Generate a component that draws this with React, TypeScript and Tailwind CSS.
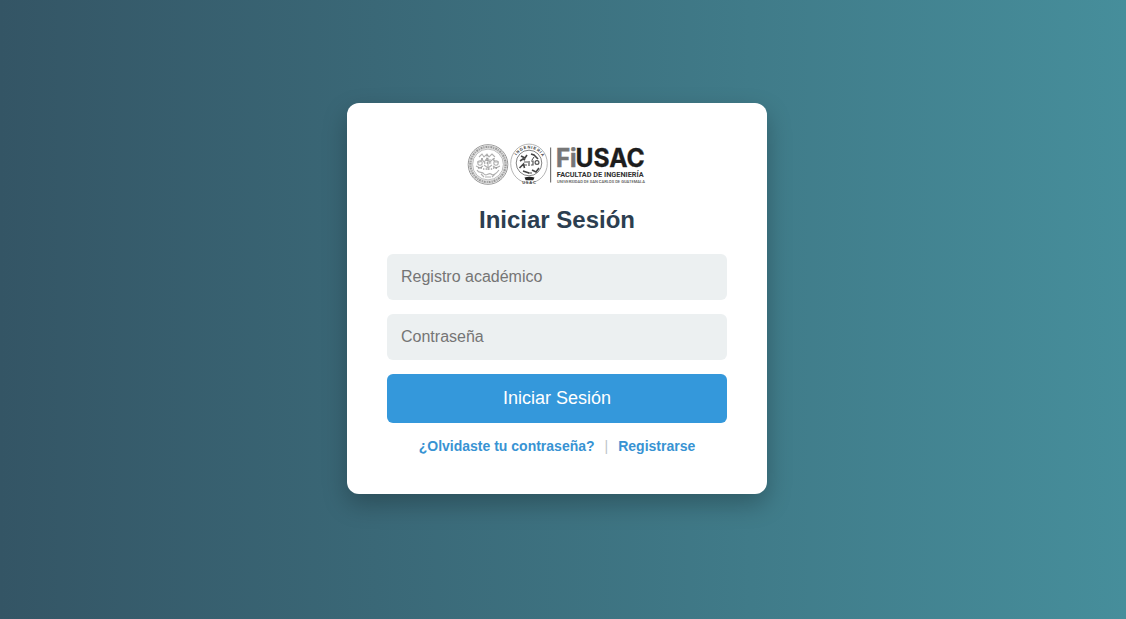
const sans = "font-['Liberation_Sans',Arial,sans-serif]";

function CarlosSeal() {
  return (
    <g fill="none" stroke="#8a8a8a">
      <circle cx="21" cy="21.5" r="19.8" strokeWidth="0.9" />
      <circle cx="21" cy="21.5" r="17.6" stroke="#d2d2d2" strokeWidth="3.2" />
      <circle cx="21" cy="21.5" r="17.6" stroke="#989898" strokeWidth="2" strokeDasharray="1.6 1.2 0.8 1.4" />
      <circle cx="21" cy="21.5" r="15.4" stroke="#a0a0a0" strokeWidth="0.7" />
      <g stroke="#b0b0b0" strokeWidth="1.1">
        <path d="M12 14l3-3 2 3 3-3 2 3 3-3 3 3M10 19h3l2-3 2 3 3-3 3 3 3-3 2 3h4" />
        <path d="M21 15v12M18 17h6M17 22l4 3 4-3M9 23l4 2 3-2M26 23l3 2 4-2" />
        <path d="M10 27c2 4 5 1 7 4s5-2 7 0 5 0 8-4M14 31l3 3M28 31l-3 3M18 34h6" />
        <circle cx="13" cy="20" r="2.2" />
        <circle cx="29" cy="20" r="2.2" />
      </g>
      <g stroke="#777" strokeWidth="1" strokeDasharray="1.4 1.2">
        <path d="M17 20h8M16 26h10M11 25h5M26 25h5M20 12v6M15 15v3M27 15v3" />
      </g>
    </g>
  );
}

function EngineeringSeal() {
  return (
    <g fill="none">
      <ellipse cx="62" cy="20.5" rx="18.3" ry="19.4" stroke="#a2a2a2" strokeWidth="0.8" />
      <circle cx="62" cy="20" r="12.8" stroke="#777" strokeWidth="0.9" />
      <path id="seal-top" d="M47.4 18.5a14.7 14.7 0 0 1 29.2 0" />
      <text fill="#333" fontSize="4" fontWeight="700" fontFamily="Liberation Sans, sans-serif">
        <textPath href="#seal-top" startOffset="6.5" textLength="31">INGENIERIA</textPath>
      </text>
      <g stroke="#444" strokeWidth="1.6">
        <path d="M54 13l4 2 2-3M64 11l3 1 4 4M53 18l3-2 2 1M52.5 25l4-4 1 4M56 28l6 2M65 27l4 2 3-4" />
        <path d="M67 14l-2 3M56 14l2 3M61 30h4" strokeWidth="1" />
      </g>
      <g stroke="#555" strokeWidth="1.2">
        <path d="M57 19h4M57 22h3M62 18v5M64 18h2v4h-2" />
        <circle cx="70" cy="19.5" r="1.9" />
      </g>
      <path d="M57.5 34.5q5-1.6 10 0l-1.3 2.7h-7.4z" fill="#222" />
      <text x="55.2" y="41" fill="#444" fontSize="4" fontWeight="700" textLength="13.6" fontFamily="Liberation Sans, sans-serif">
        USAC
      </text>
    </g>
  );
}

function Logo() {
  return (
    <svg width="180" height="43" viewBox="0 0 180 43" role="img" aria-label="FIUSAC" className="block overflow-visible">
      <CarlosSeal />
      <EngineeringSeal />
      <path d="M83.6 4.5v35" stroke="#777" strokeWidth="1.2" />
      <g fontFamily="Inter, sans-serif" fontWeight="700" fontSize="25">
        <text x="89" y="24.2" fill="#777" stroke="#777" strokeWidth="0.6" textLength="20.6" lengthAdjust="spacingAndGlyphs">Fi</text>
        <text x="108.6" y="24.2" fill="#1d1d1d" stroke="#1d1d1d" strokeWidth="0.3" textLength="69.2" lengthAdjust="spacingAndGlyphs">USAC</text>
      </g>
      <g fontFamily="Roboto, sans-serif">
        <text x="89.8" y="34" fontSize="7.6" fontWeight="700" fill="#333" textLength="86.8" lengthAdjust="spacingAndGlyphs">FACULTAD DE INGENIERÍA</text>
        <text x="90" y="40.1" fontSize="4.4" fontWeight="500" fill="#555" textLength="88" lengthAdjust="spacingAndGlyphs">UNIVERSIDAD DE SAN CARLOS DE GUATEMALA</text>
      </g>
    </svg>
  );
}

const field =
  "h-[46px] w-full rounded-md bg-[#ecf0f1] px-3.5 text-base text-[#2c3e50] outline-none placeholder:text-[#757575]";

export default function App() {
  return (
    <main className={`flex h-screen items-center justify-center overflow-hidden bg-[linear-gradient(90deg,#345565,#468e9b)] pr-3 pb-[22px] ${sans}`}>
      <form
        onSubmit={(e) => e.preventDefault()}
        className="flex h-[391px] w-[420px] flex-col items-center rounded-xl bg-white p-10 shadow-[0_10px_25px_rgba(0,0,0,0.25)]"
      >
        <Logo />
        <h1 className="mt-5 mb-5 text-2xl leading-7 font-bold text-[#2c3e50]">Iniciar Sesión</h1>
        <div className="flex w-full flex-col gap-3.5">
          <input type="text" placeholder="Registro académico" className={field} />
          <input type="password" placeholder="Contraseña" className={field} />
          <button type="submit" className="h-[49px] w-full rounded-md bg-[#3498db] pb-0.5 text-lg text-white">
            Iniciar Sesión
          </button>
        </div>
        <nav className="mt-[15px] flex gap-2.5 text-sm leading-4 font-bold text-[#3893d3]">
          <a href="#recuperar">¿Olvidaste tu contraseña?</a>
          <span className="font-normal text-[#bdc3c7]">|</span>
          <a href="#registro">Registrarse</a>
        </nav>
      </form>
    </main>
  );
}
